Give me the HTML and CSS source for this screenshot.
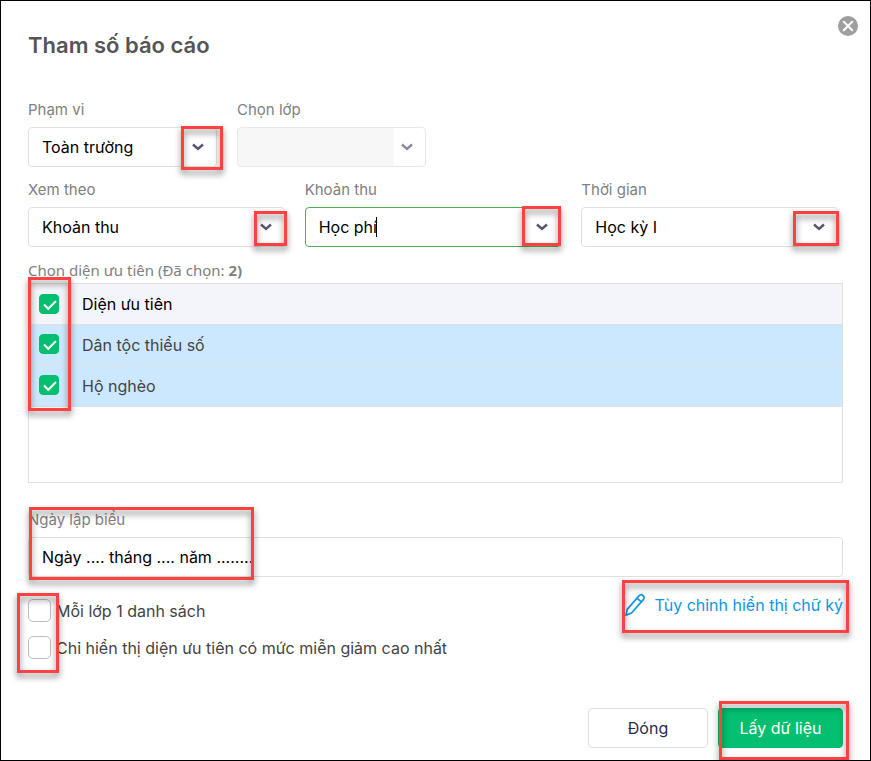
FILE: index.html
```html
<!DOCTYPE html>
<html lang="vi">
<head>
  <meta charset="UTF-8">
  <meta name="viewport" content="width=device-width, initial-scale=1.0">
  <title>Tham số báo cáo</title>
  <link rel="stylesheet" href="styles.css">
</head>
<body>

<form class="dialog">
  <button type="button" class="close" aria-label="Đóng hộp thoại">
    <svg width="20" height="20" viewBox="0 0 20 20">
      <circle cx="10" cy="10" r="10" fill="#9e9e9e"/>
      <path d="M5.8 5.8l8.4 8.4M14.2 5.8l-8.4 8.4" stroke="#fff" stroke-width="2.2" stroke-linecap="round"/>
    </svg>
  </button>

  <h1>Tham số báo cáo</h1>

  <div class="row row-scope">
    <div class="field">
      <label for="scope">Phạm vi</label>
      <div class="select">
        <select id="scope"><option>Toàn trường</option></select>
        <svg class="arrow" viewBox="0 0 12 8"><path d="M1 1.5L6 6l5-4.5"/></svg>
        <span class="mark mark-scope"></span>
      </div>
    </div>
    <div class="field">
      <label for="class">Chọn lớp</label>
      <div class="select disabled">
        <select id="class" disabled><option></option></select>
        <svg class="arrow" viewBox="0 0 12 8"><path d="M1 1.5L6 6l5-4.5"/></svg>
      </div>
    </div>
  </div>

  <div class="row row-filter">
    <div class="field">
      <label for="view">Xem theo</label>
      <div class="select">
        <select id="view"><option>Khoản thu</option></select>
        <svg class="arrow" viewBox="0 0 12 8"><path d="M1 1.5L6 6l5-4.5"/></svg>
        <span class="mark mark-view"></span>
      </div>
    </div>
    <div class="field">
      <label for="fee">Khoản thu</label>
      <div class="select active">
        <select id="fee"><option>Học phí</option></select>
        <span class="caret"></span>
        <svg class="arrow" viewBox="0 0 12 8"><path d="M1 1.5L6 6l5-4.5"/></svg>
        <span class="mark mark-fee"></span>
      </div>
    </div>
    <div class="field">
      <label for="time">Thời gian</label>
      <div class="select">
        <select id="time"><option>Học kỳ I</option></select>
        <svg class="arrow" viewBox="0 0 12 8"><path d="M1 1.5L6 6l5-4.5"/></svg>
        <span class="mark mark-time"></span>
      </div>
    </div>
  </div>

  <p class="caption">Chọn diện ưu tiên (Đã chọn: <b>2)</b></p>
  <div class="grid">
    <table>
      <thead>
        <tr>
          <th class="tick"><input type="checkbox" class="check" aria-label="Chọn tất cả" checked></th>
          <th>Diện ưu tiên</th>
        </tr>
      </thead>
      <tbody>
        <tr>
          <td class="tick"><input type="checkbox" class="check" id="p1" checked></td>
          <td><label for="p1">Dân tộc thiểu số</label></td>
        </tr>
        <tr>
          <td class="tick"><input type="checkbox" class="check" id="p2" checked></td>
          <td><label for="p2">Hộ nghèo</label></td>
        </tr>
      </tbody>
    </table>
    <span class="mark mark-grid"></span>
  </div>

  <div class="field date">
    <label for="date">Ngày lập biểu</label>
    <input type="text" class="text" id="date" value="Ngày .... tháng .... năm ........">
    <span class="mark mark-date"></span>
  </div>

  <div class="options">
    <div class="option-list">
      <label class="option"><input type="checkbox" class="check large"> Mỗi lớp 1 danh sách</label>
      <label class="option"><input type="checkbox" class="check large"> Chỉ hiển thị diện ưu tiên có mức miễn giảm cao nhất</label>
      <span class="mark mark-options"></span>
    </div>
    <a href="#" class="sign">
      <svg width="22" height="24" viewBox="0 0 22 24" fill="none" stroke="#0f96e8" stroke-width="1.7" stroke-linejoin="round" stroke-linecap="round">
        <path d="M1 22.2L2.2 16.4 14 2.9c1.1-1.3 2.8-1.4 4-.4s1.4 2.8.3 4.1L6.5 20z"/>
        <path d="M12 5.2l4.3 3.7"/>
      </svg>
      Tùy chỉnh hiển thị chữ ký
      <span class="mark mark-sign"></span>
    </a>
  </div>

  <div class="footer">
    <button type="button" class="btn">Đóng</button>
    <div class="submit">
      <button type="submit" class="btn primary">Lấy dữ liệu</button>
      <span class="mark mark-submit"></span>
    </div>
  </div>
</form>

</body>
</html>
```
FILE: styles.css
```css
* {
  box-sizing: border-box;
}

body {
  margin: 0;
  background: #fff;
  color: #444;
  font-family: Inter, "Liberation Sans", sans-serif;
  font-size: 16px;
  line-height: 20px;
}

.dialog {
  position: relative;
  border: 1px solid #000;
  padding: 30px 27px 12px;
}

.close {
  position: absolute;
  top: 15px;
  right: 12px;
  width: 20px;
  height: 20px;
  padding: 0;
  border: none;
  background: none;
  cursor: pointer;
}

h1 {
  margin: 0 0 41px;
  color: #555;
  font-size: 22px;
  line-height: 28px;
  font-weight: 600;
}

/* form fields */
.row {
  display: flex;
  gap: 20px;
  margin-bottom: 13px;
}

.row-scope .field {
  flex: 0 1 189px;
}

.row-filter {
  padding-right: 5px;
}

.row-filter .field {
  flex: 1;
}

.field label {
  display: block;
  margin-bottom: 7px;
  color: #808080;
  font-size: 15px;
}

.select {
  position: relative;
}

select,
.text {
  display: block;
  width: 100%;
  height: 40px;
  padding: 0 13px;
  border: 1px solid #e0e0e0;
  border-radius: 4px;
  background: #fff;
  color: #000;
  font: inherit;
  appearance: none;
}

.active select {
  border-color: #4caf50;
}

.disabled select {
  border-color: #e8e8e8;
  background: linear-gradient(to left, #fff 31px, #f7f7f7 31px);
  opacity: 1;
}

.arrow {
  position: absolute;
  top: 16px;
  right: 13px;
  width: 12px;
  height: 8px;
  fill: none;
  stroke: #55566f;
  stroke-width: 2.4;
  pointer-events: none;
}

.disabled .arrow {
  stroke: #8a8a9e;
}

.caret {
  position: absolute;
  top: 10px;
  left: 71px;
  width: 1px;
  height: 20px;
  background: #000;
}

/* priority table */
.caption {
  margin: 0 0 3px;
  color: #808080;
  font-family: "Noto Sans", sans-serif;
  font-size: 15px;
}

.grid {
  position: relative;
  height: 200px;
  margin-bottom: 27px;
  border: 1px solid #e0e0e0;
}

table {
  width: 100%;
  border-collapse: separate;
  border-spacing: 0;
}

th,
td {
  height: 41px;
  padding: 0;
  border-bottom: 1px solid #e0e0e0;
  text-align: left;
  font-weight: 400;
}

th {
  background: #f4f5fa;
  color: #000;
}

td {
  background: #cce8ff;
}

.tick {
  width: 53px;
  padding-left: 10px;
}

td.tick {
  padding-bottom: 3px;
}

.check {
  display: block;
  position: relative;
  flex: none;
  width: 20px;
  height: 20px;
  margin: 0;
  border: 1px solid #bdbdbd;
  border-radius: 4px;
  background: #fff;
  appearance: none;
}

.check:checked {
  border-color: #03bf6f;
  background: #03bf6f;
}

.check:checked::after {
  content: "";
  position: absolute;
  top: 5px;
  left: 4px;
  width: 10px;
  height: 5px;
  border: solid #fff;
  border-width: 0 0 2px 2px;
  transform: rotate(-45deg);
}

.check.large {
  width: 23px;
  height: 23px;
  border-radius: 5px;
}

/* date and options */
.date {
  position: relative;
  margin-bottom: 16px;
}

.options {
  display: flex;
  justify-content: space-between;
  align-items: flex-start;
}

.option-list {
  position: relative;
  display: flex;
  flex-direction: column;
  gap: 14px;
  padding-top: 6px;
}

.option {
  display: flex;
  align-items: center;
  gap: 5px;
}

.sign {
  position: relative;
  display: flex;
  align-items: center;
  gap: 8px;
  color: #0f96e8;
  text-decoration: none;
}

.footer {
  display: flex;
  justify-content: flex-end;
  gap: 10px;
  margin-top: 49px;
}

.submit {
  position: relative;
}

.btn {
  display: block;
  width: 120px;
  height: 40px;
  border: 1px solid #e0e0e0;
  border-radius: 4px;
  background: #fff;
  color: #2b2b4b;
  font: inherit;
  cursor: pointer;
}

.primary {
  width: 125px;
  border-color: #03bf6f;
  background: #03bf6f;
  color: #fff;
}

/* red highlight boxes */
.mark {
  position: absolute;
  border: 3px solid #ff4141;
  filter: drop-shadow(0 4px 3px rgba(0, 0, 0, 0.5));
  pointer-events: none;
}

.mark-scope {
  top: -1px;
  right: -6px;
  width: 42px;
  height: 44px;
}

.mark-view {
  top: 4px;
  right: -2px;
  width: 33px;
  height: 35px;
}

.mark-fee {
  top: -1px;
  right: 0;
  width: 39px;
  height: 40px;
}

.mark-time {
  top: 4px;
  right: -1px;
  width: 46px;
  height: 35px;
}

.mark-grid {
  top: -7px;
  left: -1px;
  width: 43px;
  height: 134px;
}

.mark-date {
  top: -3px;
  left: 1px;
  width: 225px;
  height: 73px;
}

.mark-options {
  top: 0;
  left: -11px;
  width: 42px;
  height: 80px;
}

.mark-sign {
  top: -13px;
  right: -6px;
  width: 227px;
  height: 53px;
}

.mark-submit {
  top: -7px;
  right: -6px;
  width: 130px;
  height: 59px;
}
```
